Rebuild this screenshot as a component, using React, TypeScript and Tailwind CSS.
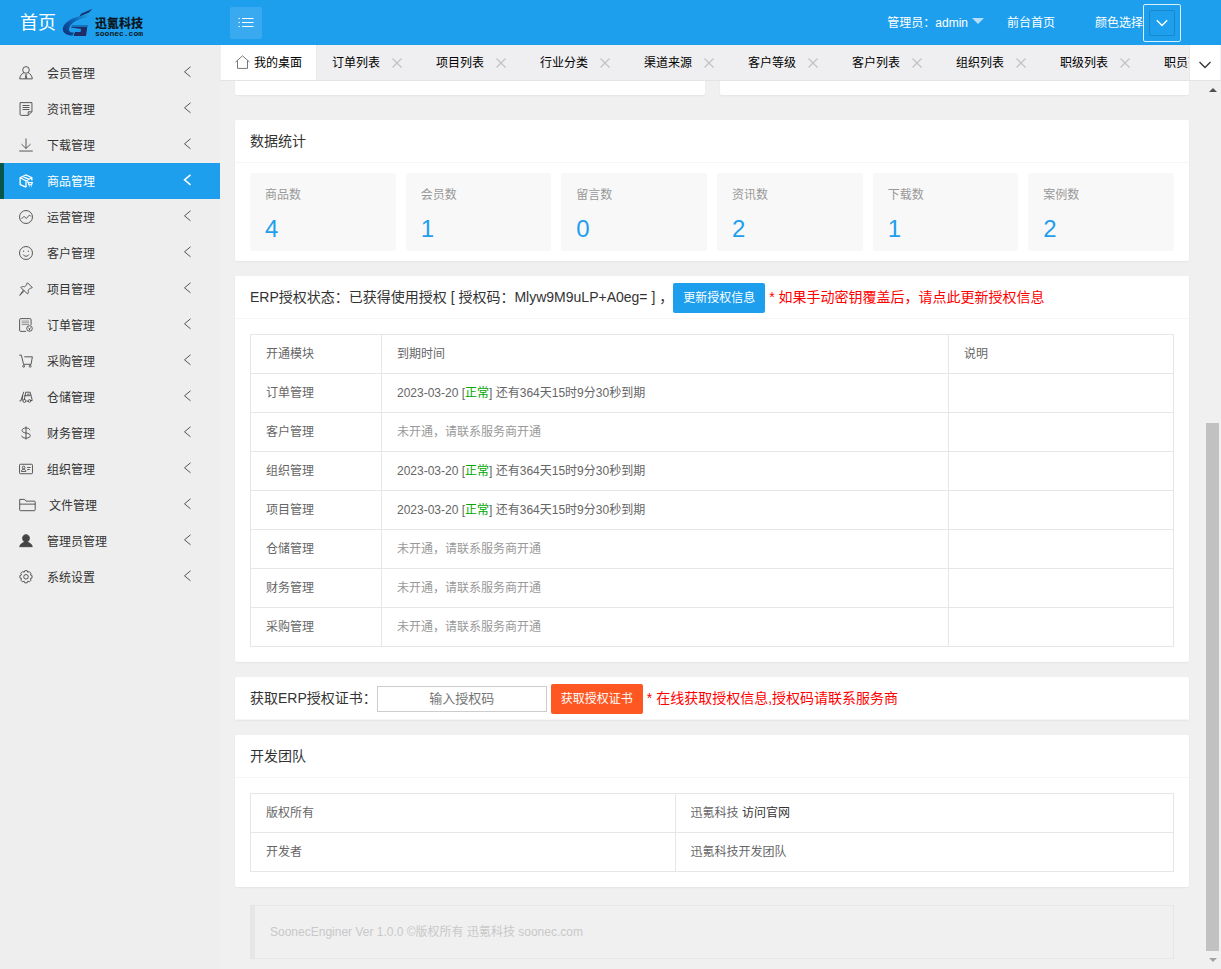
import type { ReactNode } from "react";

const icons: Record<string, ReactNode> = {
   member: (
      <>
         <circle cx="8" cy="4.5" r="3.8" />
         <path d="M5.6 7.6C2.8 9 1 11.500.8 14.700h14.400C15 11.500 13.200 9 10.400 7.600M7 9.500l1 1-1 4M9 9.500l-1 1 1 4" />
      </>
   ),
   news: (
      <path d="M10.500 15.300H2.500a1.300 1.300 0 0 1-1.300-1.300V.7h13.600V11l-4.300 4.300V11.200h4M4 4h8M4 6.300h8M4 8.600h8" />
   ),
   download: <path d="M8 .5v11.300M2.800 7 8 12l5.200-5M.3 14.900h15.400" />,
   goods: (
      <>
         <path d="M8 15 1.300 12V4.300L8 1l6.700 3.300v3M1.300 4.300 8 7.700l6.700-3.400M8 7.700V15M4.500 2.800l6.700 3.300" strokeWidth="1.500" />
         <path d="M9 9h1.300l1 3.500h3l.9-2.600h-4.300M11.500 14.500h.6M13.800 14.500h.6" strokeWidth="1.400" />
      </>
   ),
   operate: (
      <>
         <circle cx="8" cy="8" r="7.400" />
         <path d="m2.800 10.200 3-3 2.400 2.500L12 5.800l1.600 1.600" />
      </>
   ),
   customer: (
      <>
         <circle cx="8" cy="8" r="7.400" />
         <path d="M4.800 9.800a3.600 3.600 0 0 0 6.400 0M5.300 5.300v1.500M10.700 5.300v1.500" />
      </>
   ),
   project: (
      <path d="m9.700.8 5.500 5.500-1.500.8-.7-.2-2.500 2.500c.5 1.700.3 3-.7 4.300L6.200 10.200.8 15.300 5 9.200 2 6.200c1.300-1 2.900-1.200 4.500-.8L9 3l-.2-.8zM6.200 10.200l-1.200-1" />
   ),
   order: (
      <>
         <path d="M8 15.300H2A1.300 1.300 0 0 1 .7 14V2A1.300 1.300 0 0 1 2 .7h10.500A1.300 1.300 0 0 1 13.800 2v6" />
         <path d="M3 3.500h8.500M3 5.500h8.500M3 7.500h8.500" opacity="0.6" />
         <circle cx="12" cy="12" r="3.200" />
         <path d="m10.600 11.300 1.400 1 1.400-1M12 12.300v1.700" />
      </>
   ),
   purchase: (
      <>
         <path d="M.3 1.300h2.400l2.500 10.500h8.600l1.500-8.600H6" />
         <circle cx="5.300" cy="14" r="1.100" />
         <circle cx="12.800" cy="14" r="1.100" />
      </>
   ),
   storage: (
      <>
         <path d="M5.500 2 2 12.500H.5M6 11.500 7.700 2.500h5l1.500 5.200.9 4.300h-2.300M6 6.500h7.500M8.500 12.800h2.200M9.200 4.800h3M4.300 6 3.500 12" />
         <circle cx="6.200" cy="12.500" r="1.700" />
         <circle cx="12" cy="12.500" r="1.500" />
      </>
   ),
   finance: (
      <path d="M8 .5v15M12.500 4.800C12.300 3.300 10.600 2.300 8 2.300S3.500 3.300 3.500 5.100 5.300 7.500 8 8s4.900 1.100 4.900 3S11 13.800 8 13.800s-4.800-1-5-2.800" />
   ),
   org: (
      <>
         <rect x=".6" y="2.600" width="14.800" height="10.800" rx="1" />
         <circle cx="5.300" cy="6.300" r="1.500" />
         <path d="M2.700 10.800c.2-1.600 1-2.500 2.600-2.500s2.400.9 2.600 2.500zM9.300 6.300h4M9.300 8.600h3" />
      </>
   ),
   folder: <path d="M.6 14V1.600h5.600l1.500 2h9.600a1 1 0 0 1 1 1V13.500a1 1 0 0 1-1 1H1.200zM.6 7h17.700" />,
   admin: (
      <path
         d="M8 .8c2.300 0 3.900 1.600 3.900 4 0 1.700-.8 3.300-2 4.100.2 1.200 4.800 1.700 5.300 5.600H.8c.5-3.900 5.100-4.400 5.300-5.600-1.200-.8-2-2.400-2-4.100 0-2.400 1.600-4 3.900-4z"
         fill="currentColor"
      />
   ),
   setting: (
      <>
         <path d="m6.600.8 2.800 0 .6 1.800 1.700-.8 2 2-.7 1.800 1.900.7v2.800l-1.900.7.8 1.800-2 2-1.800-.8-.7 1.900H6.600l-.7-1.900-1.800.8-2-2 .8-1.800L1 9.100V6.300l1.900-.7-.8-1.800 2-2 1.800.8z" />
         <circle cx="8" cy="7.800" r="2.600" />
      </>
   ),
};

const menu = [
   { icon: "member", label: "会员管理" },
   { icon: "news", label: "资讯管理" },
   { icon: "download", label: "下载管理" },
   { icon: "goods", label: "商品管理", active: true },
   { icon: "operate", label: "运营管理" },
   { icon: "customer", label: "客户管理" },
   { icon: "project", label: "项目管理" },
   { icon: "order", label: "订单管理" },
   { icon: "purchase", label: "采购管理" },
   { icon: "storage", label: "仓储管理" },
   { icon: "finance", label: "财务管理" },
   { icon: "org", label: "组织管理" },
   { icon: "folder", label: "文件管理", wide: true },
   { icon: "admin", label: "管理员管理" },
   { icon: "setting", label: "系统设置" },
];

const tabs = ["订单列表", "项目列表", "行业分类", "渠道来源", "客户等级", "客户列表", "组织列表", "职级列表", "职员列表"];

const stats = [
   { label: "商品数", value: 4 },
   { label: "会员数", value: 1 },
   { label: "留言数", value: 0 },
   { label: "资讯数", value: 2 },
   { label: "下载数", value: 1 },
   { label: "案例数", value: 2 },
];

const modules = [
   { name: "订单管理", open: true },
   { name: "客户管理", open: false },
   { name: "组织管理", open: true },
   { name: "项目管理", open: true },
   { name: "仓储管理", open: false },
   { name: "财务管理", open: false },
   { name: "采购管理", open: false },
];

function Logo() {
   return (
      <span className="flex items-end gap-px">
         <svg width="32" height="30" viewBox="0 0 32 30" aria-hidden="true">
            <defs>
               <linearGradient id="swoosh" x1="0" y1="1" x2="1" y2="0">
                  <stop offset="0" stopColor="#0b2f74" />
                  <stop offset="0.500" stopColor="#0c62b4" />
                  <stop offset="1" stopColor="#27b0ee" />
               </linearGradient>
            </defs>
            <path d="M31 5 20 7.500C9 10 1 15 .8 21c0 4 4 6.500 9.700 6.500l1.500-3C8.500 25 6.800 23.500 7 21 7.500 16 14 11.500 24 9.500z" fill="url(#swoosh)" />
            <path d="M30.500.8 19 5.800 17.500 8.500 27 4.500z" fill="#15356f" />
            <path d="M9 19.500 11 17h14.500l-1.500 11H11.500l1.500-4h5.500l.6-3z" fill="#1f2c66" />
            <path d="M11 17h14.500l-.4 2H9.500z" fill="#1273c0" />
         </svg>
         <span className="flex flex-col text-[#0c1722]">
            <span className="text-xs leading-3 font-black">迅氪科技</span>
            <span className="font-['Liberation_Mono'] text-[8px] leading-2 font-bold">soonec.com</span>
         </span>
      </span>
   );
}

function Card({ title, children }: { title: ReactNode; children?: ReactNode }) {
   return (
      <section className="rounded-xs bg-white shadow-[0_1px_2px_rgba(0,0,0,0.05)]">
         <h2 className="flex h-[43px] items-center border-b border-[#f6f6f6] px-[15px] text-sm text-[#333]">{title}</h2>
         {children}
      </section>
   );
}

export default function App() {
   return (
      <div className="flex h-screen flex-col overflow-hidden bg-[#f0f0f0] font-['Liberation_Sans','Noto_Sans_CJK_SC',sans-serif] text-xs text-[#333]">
         {/* Top bar */}
         <header className="flex h-[45px] shrink-0 items-center bg-[#1e9fee] text-white">
            <div className="flex w-[230px] items-center gap-1.5 pl-5">
               <a href="#" className="text-lg">首页</a>
               <Logo />
            </div>
            <button aria-label="折叠菜单" className="flex size-8 items-center justify-center rounded-xs bg-white/12">
               <svg width="16" height="12" viewBox="0 0 16 12" fill="none" stroke="currentColor" aria-hidden="true">
                  <path d="M.5 1.500h1.500M.5 5.500h1.500M.5 9.500h1.500M4 1.500h11.500M4 5.500h11.500M4 9.500h11.500" />
               </svg>
            </button>
            <nav className="ml-auto flex items-center pr-10">
               <a href="#" className="flex items-center gap-1">
                  <span>管理员：admin</span>
                  <svg width="12" height="6" viewBox="0 0 12 6" className="mb-1" aria-hidden="true">
                     <path d="M0 0h12L6 6z" fill="#b4dff9" />
                  </svg>
               </a>
               <a href="#" className="ml-[23px]">前台首页</a>
               <span className="ml-10">颜色选择</span>
               <button aria-label="颜色选择" className="flex size-[38px] items-center justify-center rounded-xs border border-[#d8effc]">
                  <span className="flex size-[26px] items-center justify-center rounded-xs border border-[#1a87ca]">
                     <svg width="12" height="8" viewBox="0 0 12 8" fill="none" stroke="currentColor" strokeWidth="1.400" aria-hidden="true">
                        <path d="m.8 1.300 5.200 5.200 5.200-5.200" />
                     </svg>
                  </span>
               </button>
            </nav>
         </header>

         <div className="flex min-h-0 flex-1">
            {/* Sidebar */}
            <nav className="w-[220px] shrink-0 bg-[#eee] pt-2.5">
               <ul>
                  {menu.map((m) => (
                     <li key={m.label}>
                        <a
                           href="#"
                           className={
                              m.active
                                 ? "flex h-9 items-center border-l-4 border-[#06564c] bg-[#1e9fee] pr-7 pl-[15px] text-white"
                                 : "flex h-9 items-center border-l-4 border-transparent pr-7 pl-[15px]"
                           }
                        >
                           <svg
                              width={m.wide ? 17 : 14}
                              height="14"
                              viewBox={m.wide ? "0 0 19 16" : "0 0 16 16"}
                              fill="none"
                              stroke="currentColor"
                              className={m.active ? "text-white" : "text-[#444]"}
                              aria-hidden="true"
                           >
                              {icons[m.icon]}
                           </svg>
                           <span className={m.wide ? "ml-[13px] pt-0.5" : "ml-3.5 pt-0.5"}>{m.label}</span>
                           <svg
                              width="10"
                              height="12"
                              viewBox="0 0 10 12"
                              fill="none"
                              stroke="currentColor"
                              strokeWidth={m.active ? 1.5 : 1}
                              className={m.active ? "mb-0.5 ml-auto" : "mb-0.5 ml-auto text-[#555]"}
                              aria-hidden="true"
                           >
                              <path d="M8.500.8 2.500 5.800l6 5" />
                           </svg>
                        </a>
                     </li>
                  ))}
               </ul>
            </nav>

            <main className="flex min-w-0 flex-1 flex-col">
               {/* Page tabs */}
               <div className="flex h-9 shrink-0 border-b border-[#e4e4e4] bg-[#efeef0] pl-px text-black">
                  <div className="flex min-w-0 flex-1 overflow-hidden">
                     <button className="flex w-24 shrink-0 items-center gap-1 border-r border-[#e8e8e8] bg-white pl-3.5">
                        <svg width="15" height="14" viewBox="0 0 15 14" fill="none" stroke="#777" className="mb-0.5" aria-hidden="true">
                           <path d="M.5 7 7.500.8l7 6.200M2.500 5.500v7.900h10V5.500" />
                        </svg>
                        我的桌面
                     </button>
                     {tabs.map((t) => (
                        <div key={t} className="flex w-[104px] shrink-0 items-center pl-[15px]">
                           <button>{t}</button>
                           <button aria-label={`关闭${t}`} className="ml-3">
                              <svg width="10" height="10" viewBox="0 0 10 10" stroke="#c2c2c2" strokeWidth="1.200" aria-hidden="true">
                                 <path d="m.5.5 9 9m0-9-9 9" />
                              </svg>
                           </button>
                        </div>
                     ))}
                  </div>
                  <button aria-label="更多标签" className="mr-px flex w-[31px] items-center justify-center border-l border-[#e8e8e8] bg-white pt-1">
                     <svg width="12" height="8" viewBox="0 0 12 8" fill="none" stroke="#333" strokeWidth="1.300" aria-hidden="true">
                        <path d="m.5 1 5.500 5.500L11.500 1" />
                     </svg>
                  </button>
               </div>

               <div className="flex min-h-0 flex-1">
                  <div className="flex min-w-0 flex-1 flex-col gap-[15px] overflow-hidden px-[15px]">
                     <div className="mb-2.5 grid grid-cols-2 gap-[15px]">
                        <div className="h-3.5 rounded-b-xs bg-white shadow-[0_1px_2px_rgba(0,0,0,0.05)]" />
                        <div className="h-3.5 rounded-b-xs bg-white shadow-[0_1px_2px_rgba(0,0,0,0.05)]" />
                     </div>

                     <Card title="数据统计">
                        <dl className="grid grid-cols-6 gap-2.5 px-[15px] py-2.5">
                           {stats.map((s) => (
                              <div key={s.label} className="h-[78px] rounded-xs bg-[#f8f8f8] px-[15px] pt-3">
                                 <dt className="leading-5 text-[#999]">{s.label}</dt>
                                 <dd className="pt-2 text-2xl leading-8 text-[#1e9fee]">{s.value}</dd>
                              </div>
                           ))}
                        </dl>
                     </Card>

                     {/* ERP licence */}
                     <Card
                        title={
                           <>
                              <span>ERP授权状态：已获得使用授权 [ 授权码：Mlyw9M9uLP+A0eg= ] ，</span>
                              <button className="mt-px h-[30px] rounded-xs bg-[#1e9fee] px-2.5 text-xs text-white">更新授权信息</button>
                              <span className="ml-1 text-[#f00]">* 如果手动密钥覆盖后，请点此更新授权信息</span>
                           </>
                        }
                     >
                        <div className="p-[15px]">
                           <table className="w-full table-fixed border-collapse text-left text-[#666] [&_td]:h-[39px] [&_td]:border [&_td]:border-[#e6e6e6] [&_td]:px-[15px] [&_th]:h-[39px] [&_th]:border [&_th]:border-[#e6e6e6] [&_th]:px-[15px] [&_th]:font-normal">
                              <thead>
                                 <tr>
                                    <th className="w-[131px]">开通模块</th>
                                    <th>到期时间</th>
                                    <th className="w-[225px]">说明</th>
                                 </tr>
                              </thead>
                              <tbody>
                                 {modules.map((m) => (
                                    <tr key={m.name}>
                                       <td>{m.name}</td>
                                       {m.open ? (
                                          <td>
                                             2023-03-20 [<span className="text-[#00a800]">正常</span>] 还有364天15时9分30秒到期
                                          </td>
                                       ) : (
                                          <td className="text-[#999]">未开通，请联系服务商开通</td>
                                       )}
                                       <td />
                                    </tr>
                                 ))}
                              </tbody>
                           </table>
                        </div>
                     </Card>

                     <Card
                        title={
                           <>
                              <label htmlFor="licence">获取ERP授权证书：</label>
                              <input
                                 id="licence"
                                 placeholder="输入授权码"
                                 className="mt-px h-[26px] w-[170px] border border-[#ccc] text-center text-[13px] placeholder:text-[#757575]"
                              />
                              <button className="mt-px ml-1 h-[30px] rounded-xs bg-[#ff5722] px-2.5 text-xs text-white">获取授权证书</button>
                              <span className="ml-1 text-[#f00]">* 在线获取授权信息,授权码请联系服务商</span>
                           </>
                        }
                     />

                     <Card title="开发团队">
                        <div className="p-[15px]">
                           <table className="w-full table-fixed border-collapse text-left text-[#666] [&_td]:h-[39px] [&_td]:border [&_td]:border-[#e6e6e6] [&_td]:px-[15px] [&_th]:h-[39px] [&_th]:border [&_th]:border-[#e6e6e6] [&_th]:px-[15px] [&_th]:font-normal">
                              <tbody>
                                 <tr>
                                    <th scope="row" className="w-[46%]">版权所有</th>
                                    <td>
                                       迅氪科技 <a href="#" className="text-[#333]">访问官网</a>
                                    </td>
                                 </tr>
                                 <tr>
                                    <th scope="row">开发者</th>
                                    <td>迅氪科技开发团队</td>
                                 </tr>
                              </tbody>
                           </table>
                        </div>
                     </Card>

                     <footer className="mx-[15px] mt-[3px] flex h-[54px] shrink-0 items-center border border-l-[5px] border-[#e6e6e6] pl-[15px] text-[#c8c8c8]">
                        SoonecEnginer Ver 1.0.0 ©版权所有 迅氪科技 soonec.com
                     </footer>
                  </div>

                  {/* Scroll track */}
                  <div className="flex w-[17px] shrink-0 flex-col items-center py-[7px]" aria-hidden="true">
                     <svg width="8" height="4" viewBox="0 0 8 4">
                        <path d="M0 4 4 0l4 4z" fill="#505050" />
                     </svg>
                     <div className="my-[7px] flex w-[13px] flex-1 flex-col">
                        <div className="h-[38%]" />
                        <div className="flex-1 bg-[#c1c1c1]" />
                     </div>
                     <svg width="8" height="4" viewBox="0 0 8 4">
                        <path d="M0 0h8L4 4z" fill="#a3a3a3" />
                     </svg>
                  </div>
               </div>
            </main>
         </div>
      </div>
   );
}
